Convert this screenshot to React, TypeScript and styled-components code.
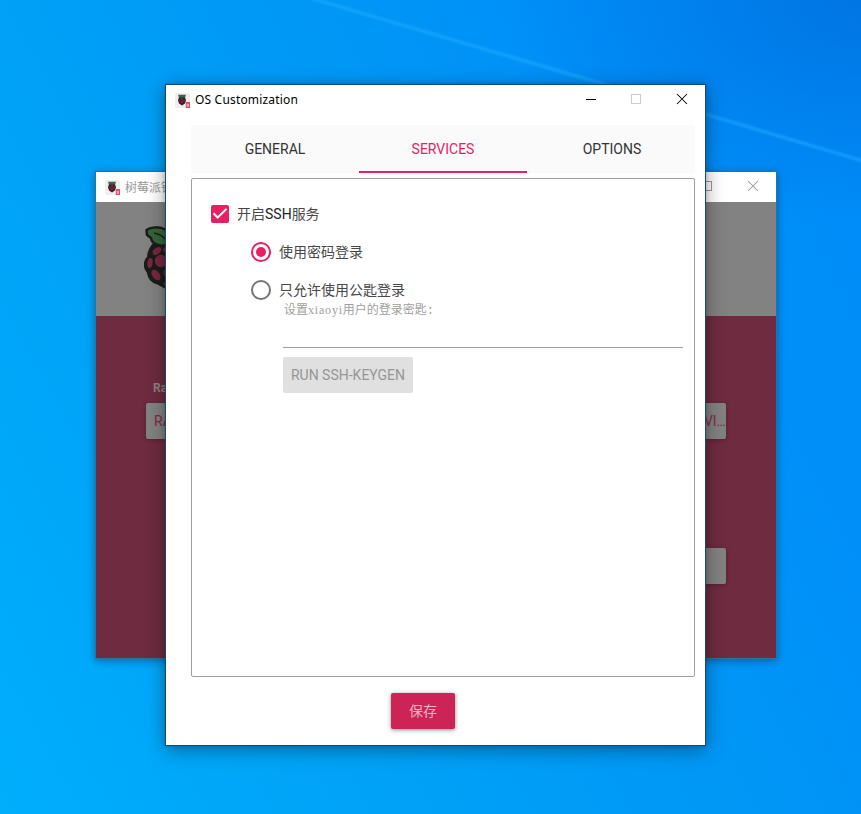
import React from "react";
import styled, { createGlobalStyle } from "styled-components";

const GlobalStyle = createGlobalStyle`
  * { box-sizing: border-box; }
  body { margin: 0; overflow: hidden; }
`;

const ui = `Roboto, "Noto Sans CJK SC", sans-serif`;

const Desktop = styled.main`
  position: relative;
  width: 861px;
  height: 814px;
  overflow: hidden;
  font-family: ${ui};
  background:
    radial-gradient(ellipse 360px 220px at 100% 0%, rgba(0, 112, 222, 0.8), rgba(0, 120, 230, 0) 100%),
    linear-gradient(62deg, #00aefc 0%, #00a4f8 25%, #0098f5 55%, #008ff9 78%, #008bf8 100%);
`;

const LightBeam = styled.svg`
  position: absolute;
  inset: 0;
`;

const Window = styled.section<{ $x: number; $y: number; $w: number; $h: number; $active?: boolean }>`
  position: absolute;
  left: ${(p) => p.$x}px;
  top: ${(p) => p.$y}px;
  width: ${(p) => p.$w}px;
  height: ${(p) => p.$h}px;
  display: flex;
  flex-direction: column;
  border: 1px solid ${(p) => (p.$active ? "#174c72" : "#2a719f")};
  background: #fff;
  background-clip: padding-box;
  box-shadow: ${(p) =>
    p.$active ? "0 4px 18px rgba(0,0,0,.36), 0 0 4px rgba(0,0,0,.18)" : "0 2px 8px rgba(0,0,0,.36)"};
`;

const TitleBar = styled.header<{ $active?: boolean }>`
  flex: 0 0 30px;
  height: 30px;
  display: flex;
  align-items: center;
  padding-left: 9px;
  background: #fff;
  color: ${(p) => (p.$active ? "#000" : "#999")};
`;

const WindowTitle = styled.h1<{ $chinese?: boolean }>`
  flex: 1;
  margin: 0 0 0 5px;
  font: 400 12px/18px ${(p) => (p.$chinese ? '"Noto Sans CJK SC"' : '"Noto Sans"')}, sans-serif;
  letter-spacing: ${(p) => (p.$chinese ? "0" : "0.18px")};
  white-space: nowrap;
`;

const CaptionButton = styled.button`
  display: grid;
  place-items: center;
  width: 46px;
  height: 30px;
  padding: 0 0 2px;
  border: 0;
  background: none;
  color: inherit;
`;

const LogoBand = styled.div`
  flex: 0 0 114px;
  padding: 24px 0 0 48px;
  background: #828282;
`;

const WriterBody = styled.div`
  flex: 1;
  display: flex;
  flex-direction: column;
  padding: 65px 50px 0;
  background: #6f2b40;
`;

const FieldLabel = styled.div`
  margin-left: 7px;
  font: 700 12px/15px ${ui};
  color: #8c8084;
`;

const PickerRow = styled.div`
  display: flex;
  justify-content: space-between;
  margin-top: 7px;
`;

const Picker = styled.button<{ $end?: boolean }>`
  width: 190px;
  height: 36px;
  padding: 0 ${(p) => (p.$end ? 0 : 8)}px 0 8px;
  border: 0;
  border-radius: 2px;
  background: #828282;
  color: #822944;
  font: 400 14px ${ui};
  text-align: ${(p) => (p.$end ? "right" : "left")};
  white-space: nowrap;
  box-shadow: 0 1px 4px rgba(0, 0, 0, 0.25);
`;

const NextRow = styled.div`
  display: flex;
  justify-content: flex-end;
  margin-top: 109px;
`;

const DialogBody = styled.div`
  flex: 1;
  display: flex;
  flex-direction: column;
  align-items: stretch;
  padding: 10px 10px 0 25px;
`;

const TabBar = styled.nav`
  display: grid;
  grid-template-columns: repeat(3, 168px);
  height: 48px;
  background: #fafafa;
`;

const Tab = styled.button<{ $selected?: boolean }>`
  padding: 1px 0 0;
  border: 0;
  border-bottom: 2px solid ${(p) => (p.$selected ? "#e91e63" : "transparent")};
  background: none;
  color: ${(p) => (p.$selected ? "#e91e63" : "#333333")};
  font: 400 14px ${ui};
  &:last-child { padding-left: 2px; }
`;

const Panel = styled.div`
  height: 499px;
  margin-top: 5px;
  padding: 16px 11px 0 19px;
  border: 1px solid #9e9e9e;
  border-radius: 2px;
`;

const Option = styled.label<{ $nested?: boolean }>`
  display: flex;
  align-items: center;
  height: 38px;
  margin-left: ${(p) => (p.$nested ? 40 : 0)}px;
  gap: 8px;
  color: #484848;
  font: 400 14px/20px ${ui};
`;

const OptionText = styled.span`
  white-space: nowrap;
`;

const Acronym = styled.span`
  color: #222;
`;

const CheckMark = styled.span`
  display: grid;
  place-items: center;
  width: 18px;
  height: 18px;
  border-radius: 2px;
  background: #e91e63;
`;

const Radio = styled.span<{ $on?: boolean }>`
  display: grid;
  place-items: center;
  width: 20px;
  height: 20px;
  border: 2px solid ${(p) => (p.$on ? "#e91e63" : "#757575")};
  border-radius: 50%;
  &::after {
    content: "";
    width: 10px;
    height: 10px;
    border-radius: 50%;
    background: ${(p) => (p.$on ? "#e91e63" : "transparent")};
  }
`;

const KeyField = styled.div`
  display: flex;
  flex-direction: column;
  align-items: flex-start;
  margin: -8px 0 0 72px;
`;

const KeyHint = styled.div`
  width: 400px;
  height: 47px;
  padding-left: 1px;
  border-bottom: 1px solid #9e9e9e;
  color: #a0a0a0;
  font: 400 12px/19px "Liberation Mono", "Noto Sans CJK SC", monospace;
`;

const Latin = styled.span`
  font-family: "Liberation Serif", serif;
  font-size: 12px;
  letter-spacing: 0.8px;
`;

const KeygenButton = styled.button`
  width: 130px;
  height: 36px;
  margin-top: 9px;
  padding: 0;
  border: 0;
  border-radius: 2px;
  background: #e0e0e0;
  color: #969696;
  font: 400 14px ${ui};
`;

const SaveButton = styled.button`
  width: 64px;
  height: 36px;
  margin: 16px 0 0 200px;
  padding: 0 0 2px;
  border: 0;
  border-radius: 2px;
  background: #cc2456;
  color: #f0b4c6;
  font: 400 14px ${ui};
  box-shadow: 0 1px 4px rgba(0, 0, 0, 0.45);
`;

function AppIcon() {
  return (
    <svg width="15" height="15" viewBox="0 0 15 15">
      <rect width="15" height="15" rx="2" fill="#eeeeee" />
      <path d="M3 1.800h8L10 4.800H4z" fill="#2f6b42" />
      <path d="M4 4.300h6l1 3-1 3.300-3 1.900-3-1.900-1-3.300z" fill="#35202a" />
      <g fill="#8c1c45">
        <circle cx="7" cy="6" r="1" />
        <circle cx="5" cy="7.500" r="1" />
        <circle cx="9" cy="7.500" r="1" />
        <circle cx="7" cy="9" r="1.200" />
      </g>
      <rect x="10.800" y="9" width="4.200" height="6" rx=".6" fill="#d84560" />
      <path d="M12.200 11h1.300v2.500h-1.300z" fill="none" stroke="#f9dce2" strokeWidth=".7" />
    </svg>
  );
}

function Raspberry() {
  return (
    <svg width="52" height="66" viewBox="0 0 52 66" stroke="#1c1c1c" strokeWidth="2.500" strokeLinejoin="round">
      <path d="M9 19C6 23 4 27 4.500 31C0 35 0 42 4 46c1 7 5 10 9 11l13 7 13-7c4-1 8-4 9-11 4-4 4-11-.5-15 .5-4-1.500-8-4.500-12L26 14z" fill="#1c1c1c" />
      <path d="M25 18C16 22 8 18 7 12L3 9l-.500-5c4-3 13-4 19.500 0 3 3 4 7 3 14z" fill="#356539" />
      <path d="M27 18c9 4 17 0 18-6l4-3 .500-5c-4-3-13-4-19.500 0-3 3-4 7-3 14z" fill="#356539" />
      <path d="M10 7c6 1 9 3 12 7" fill="none" strokeWidth="1.400" />
      <g fill="#74293f" stroke="none">
        <ellipse cx="13" cy="25" rx="5" ry="3.200" transform="rotate(-37 13 25)" />
        <ellipse cx="24" cy="24" rx="5" ry="3.500" />
        <circle cx="17" cy="35" r="6.200" />
        <circle cx="35" cy="35" r="6.200" />
        <ellipse cx="6" cy="37" rx="2.600" ry="5" transform="rotate(7 6 37)" />
        <ellipse cx="12" cy="49" rx="3.600" ry="6" transform="rotate(-38 12 49)" />
        <circle cx="26" cy="47" r="6.500" />
        <ellipse cx="40" cy="49" rx="3.600" ry="6" transform="rotate(38 40 49)" />
        <ellipse cx="24" cy="58" rx="4.500" ry="2.500" />
      </g>
    </svg>
  );
}

function Caption({ kind, muted }: { kind: "min" | "max" | "close"; muted?: string }) {
  return (
    <CaptionButton aria-label={kind}>
      <svg width="12" height="12" viewBox="0 0 12 12" fill="none" stroke={muted ?? "currentColor"} shapeRendering={kind === "close" ? "auto" : "crispEdges"}>
        {kind === "min" && <path d="M2 6.500h10" />}
        {kind === "max" && <rect x="1.500" y="1.500" width="9" height="9" />}
        {kind === "close" && <path d="M1 1l10 10M11 1 1 11" strokeWidth="1.050" />}
      </svg>
    </CaptionButton>
  );
}

export default function App() {
  return (
    <>
      <GlobalStyle />
      <Desktop>
        <LightBeam width="861" height="814" viewBox="0 0 861 814">
          <defs>
            <filter id="glow"><feGaussianBlur stdDeviation="1.3" /></filter>
            <linearGradient id="beam">
              <stop stopColor="#20b0ff" stopOpacity=".5" />
              <stop offset="1" stopColor="#18a0ff" stopOpacity=".75" />
            </linearGradient>
          </defs>
          <path d="M300-5 600 83 870 163" fill="none" stroke="url(#beam)" strokeWidth="3.500" filter="url(#glow)" />
        </LightBeam>
        <Window $x={95} $y={171} $w={682} $h={488}>
          <TitleBar>
            <AppIcon />
            <WindowTitle $chinese>树莓派镜像烧录器</WindowTitle>
            <Caption kind="min" />
            <Caption kind="max" />
            <Caption kind="close" />
          </TitleBar>
          <LogoBand><Raspberry /></LogoBand>
          <WriterBody>
            <FieldLabel>Raspberry Pi Device</FieldLabel>
            <PickerRow>
              <Picker>RASPBERRY PI 4</Picker>
              <Picker $end>MASS STORAGE DEVI…</Picker>
            </PickerRow>
            <NextRow><Picker aria-label="NEXT" /></NextRow>
          </WriterBody>
        </Window>
        <Window $x={165} $y={84} $w={541} $h={662} $active>
          <TitleBar $active>
            <AppIcon />
            <WindowTitle>OS Customization</WindowTitle>
            <Caption kind="min" />
            <Caption kind="max" muted="#cccccc" />
            <Caption kind="close" />
          </TitleBar>
          <DialogBody>
            <TabBar>
              <Tab>GENERAL</Tab>
              <Tab $selected>SERVICES</Tab>
              <Tab>OPTIONS</Tab>
            </TabBar>
            <Panel>
              <Option>
                <CheckMark>
                  <svg width="18" height="18" viewBox="0 0 18 18" fill="none" stroke="#fff" strokeWidth="2">
                    <path d="m2.500 8.300 4.200 4.200L15.500 3.900" />
                  </svg>
                </CheckMark>
                <OptionText>开启<Acronym>SSH</Acronym>服务</OptionText>
              </Option>
              <Option $nested><Radio $on /><OptionText>使用密码登录</OptionText></Option>
              <Option $nested><Radio /><OptionText>只允许使用公匙登录</OptionText></Option>
              <KeyField>
                <KeyHint>设置<Latin>xiaoyi</Latin>用户的登录密匙:</KeyHint>
                <KeygenButton>RUN SSH-KEYGEN</KeygenButton>
              </KeyField>
            </Panel>
            <SaveButton>保存</SaveButton>
          </DialogBody>
        </Window>
      </Desktop>
    </>
  );
}
